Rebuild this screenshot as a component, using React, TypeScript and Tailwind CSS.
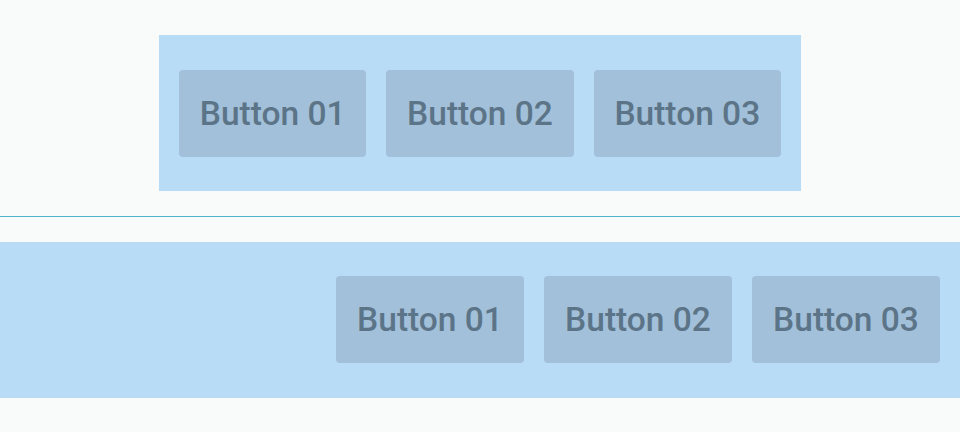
export default function App() {
  const labels = ['Button 01', 'Button 02', 'Button 03']

  const Btn = ({ label }: { label: string }) => (
    <div className="w-[188px] h-[87px] rounded-[4px] bg-[#a2c0d9] flex items-center justify-center text-[33.5px] font-medium text-[#5c7487] leading-none">
      {label}
    </div>
  )

  return (
    <div className="w-[960px] h-[432px] bg-[#f9fafa] overflow-hidden" style={{ fontFamily: 'Roboto, sans-serif' }}>
      {/* centered group */}
      <div className="pt-[35px] flex justify-center">
        <div className="w-[642px] h-[156px] bg-[#b8dcf5] flex items-start gap-[20px] px-[20px] pt-[35px]">
          {labels.map((l) => (
            <Btn key={l} label={l} />
          ))}
        </div>
      </div>

      <div className="mt-[25px] h-px bg-[#4fb3c9]" />

      {/* right aligned group */}
      <div className="mt-[25px] h-[156px] bg-[#b8dcf5] flex items-start justify-end gap-[20px] pr-[20px] pt-[34px]">
        {labels.map((l) => (
          <Btn key={l} label={l} />
        ))}
      </div>
    </div>
  )
}
